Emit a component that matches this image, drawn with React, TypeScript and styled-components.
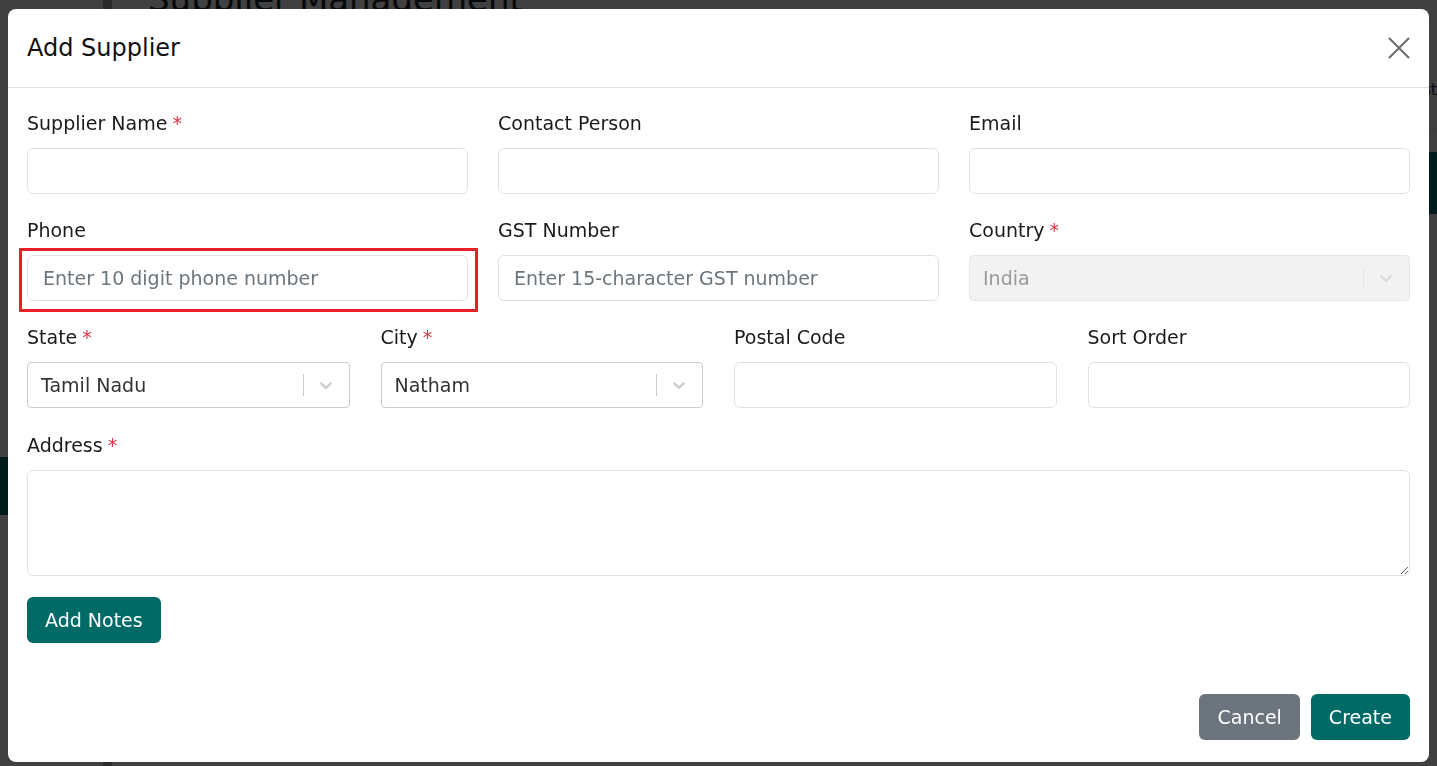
import React from 'react'
import type { FC } from 'react'
import styled, { createGlobalStyle } from 'styled-components'

const GlobalStyle = createGlobalStyle`
  html, body {
    margin: 0;
    padding: 0;
    width: 100%;
    height: 100%;
    overflow: hidden;
    font-family: 'DejaVu Sans', 'Open Sans', sans-serif;
    color: #212529;
  }
  * {
    box-sizing: border-box;
  }
`

const TEAL = '#006b66'

// page behind the dialog
const Page = styled.div`
  display: flex;
  width: 1437px;
  height: 766px;
  background: #ffffff;
`

const Sidebar = styled.aside`
  display: flex;
  flex-direction: column;
  flex-shrink: 0;
  width: 112px;
  padding-top: 457px;
  background: #ffffff;
  border-right: 9px solid #a8a8a8;
`

const SideItem = styled.div<{ $active?: boolean }>`
  flex-shrink: 0;
  height: 58px;
  padding: 0 14px;
  display: flex;
  align-items: center;
  font-size: 16px;
  color: ${(p) => (p.$active ? '#ffffff' : '#212529')};
  background: ${(p) => (p.$active ? TEAL : 'transparent')};
  margin-bottom: ${(p) => (p.$active ? '0' : '130px')};
`

const Main = styled.main`
  flex: 1;
  padding: 0 0 0 36px;
`

const PageTitle = styled.h1`
  margin: -24px 0 0;
  font-size: 34px;
  font-weight: 500;
  line-height: 46px;
`

const Toolbar = styled.div`
  display: flex;
  justify-content: flex-end;
  align-items: flex-start;
  padding-top: 58px;
  height: 108px;
  border-bottom: 1px solid #dee2e6;
  font-size: 16px;
`

const TableHead = styled.div`
  margin-top: 22px;
  height: 62px;
  background: ${TEAL};
`

const Backdrop = styled.div`
  position: fixed;
  inset: 0;
  background: rgba(0, 0, 0, 0.75);
  display: flex;
  padding: 9px 8px 4px 8px;
`

const Dialog = styled.div`
  flex: 1;
  display: flex;
  flex-direction: column;
  background: #ffffff;
  border-radius: 8px;
`

const Header = styled.header`
  display: flex;
  align-items: center;
  justify-content: space-between;
  height: 79px;
  padding: 0 18px 0 19px;
  border-bottom: 1px solid #dee2e6;
`

const Title = styled.h2`
  margin: 0;
  font-size: 24px;
  font-weight: 400;
  color: #111111;
`

const CloseButton = styled.button`
  display: flex;
  border: 0;
  background: none;
  padding: 0;
  cursor: pointer;
`

const Body = styled.div`
  flex: 1;
  padding: 22px 19px 0;
`

const Row = styled.div<{ $cols: number; $gap: number; $space?: number }>`
  display: grid;
  grid-template-columns: repeat(${(p) => p.$cols}, 1fr);
  column-gap: ${(p) => p.$gap}px;
  margin-bottom: ${(p) => p.$space ?? 23}px;
`

const Field = styled.div`
  display: flex;
  flex-direction: column;
  position: relative;
`

const Label = styled.label`
  font-size: 19px;
  line-height: 27px;
  margin-bottom: 11px;
  color: #1a1a1a;
`

const Required = styled.span`
  color: #dc3545;
  margin-left: 5px;
`

const Input = styled.input`
  height: 46px;
  padding: 0 15px;
  border: 1px solid #dee2e6;
  border-radius: 6px;
  font-family: inherit;
  font-size: 19px;
  color: #212529;
  outline: none;
  &::placeholder {
    color: #6c757d;
  }
`

const TextArea = styled.textarea`
  height: 106px;
  padding: 10px 15px;
  border: 1px solid #dee2e6;
  border-radius: 6px;
  font-family: inherit;
  font-size: 19px;
  resize: vertical;
  outline: none;
`

// red marker drawn around the phone input
const Highlight = styled.span`
  position: absolute;
  left: -8px;
  right: -10px;
  top: 31px;
  bottom: -11px;
  border: 3px solid #e8202a;
  pointer-events: none;
`

const SelectBox = styled.div<{ $disabled?: boolean }>`
  display: flex;
  align-items: center;
  height: 46px;
  border: 1px solid ${(p) => (p.$disabled ? '#e6e6e6' : '#cccccc')};
  border-radius: 4px;
  background: ${(p) => (p.$disabled ? '#f2f2f2' : '#ffffff')};
`

const SelectValue = styled.span<{ $disabled?: boolean }>`
  flex: 1;
  padding-left: 13px;
  font-size: 19px;
  color: ${(p) => (p.$disabled ? '#999999' : '#333333')};
`

const Separator = styled.span<{ $disabled?: boolean }>`
  align-self: stretch;
  width: 1px;
  margin: 11px 0;
  background: ${(p) => (p.$disabled ? '#e6e6e6' : '#cccccc')};
`

const Indicator = styled.span<{ $disabled?: boolean }>`
  display: flex;
  padding: 0 13px 0 12px;
  color: ${(p) => (p.$disabled ? '#d9d9d9' : '#cccccc')};
`

const Button = styled.button<{ $variant?: 'primary' | 'secondary' }>`
  height: 46px;
  padding: 0 18px;
  border: 0;
  border-radius: 6px;
  font-family: inherit;
  font-size: 19px;
  font-weight: 400;
  color: #ffffff;
  background: ${(p) => (p.$variant === 'secondary' ? '#6c757d' : TEAL)};
  cursor: pointer;
`

const Footer = styled.footer`
  display: flex;
  justify-content: flex-end;
  gap: 11px;
  padding: 0 19px 22px;
`

const Chevron: FC = () => (
  <svg width="20" height="20" viewBox="0 0 20 20" fill="currentColor">
    <path d="M4.516 7.548c0.436-0.446 1.043-0.481 1.576 0l3.908 3.747 3.908-3.747c0.533-0.481 1.141-0.446 1.574 0 0.436 0.445 0.408 1.197 0 1.615-0.406 0.418-4.695 4.502-4.695 4.502-0.217 0.223-0.502 0.335-0.787 0.335s-0.57-0.112-0.789-0.335c0 0-4.287-4.084-4.695-4.502s-0.436-1.170 0-1.615z" />
  </svg>
)

type SelectProps = { value: string; disabled?: boolean }

const Select: FC<SelectProps> = ({ value, disabled }) => (
  <SelectBox $disabled={disabled}>
    <SelectValue $disabled={disabled}>{value}</SelectValue>
    <Separator $disabled={disabled} />
    <Indicator $disabled={disabled}>
      <Chevron />
    </Indicator>
  </SelectBox>
)

type LabelProps = { text: string; required?: boolean }

const FieldLabel: FC<LabelProps> = ({ text, required }) => (
  <Label>
    {text}
    {required && <Required>*</Required>}
  </Label>
)

const App: FC = () => {
  return (
    <>
      <GlobalStyle />
      <Page>
        <Sidebar>
          <SideItem $active>Supplier</SideItem>
          <SideItem>Supplier</SideItem>
          <SideItem>Order</SideItem>
        </Sidebar>
        <Main>
          <PageTitle>Supplier Management</PageTitle>
          <Toolbar>Supplier List</Toolbar>
          <TableHead />
        </Main>
      </Page>

      <Backdrop>
        <Dialog role="dialog">
          <Header>
            <Title>Add Supplier</Title>
            <CloseButton aria-label="Close">
              <svg width="24" height="24" viewBox="0 0 24 24" fill="none" stroke="#6b6b6b" strokeWidth="2">
                <path d="M2 2 L22 22 M22 2 L2 22" />
              </svg>
            </CloseButton>
          </Header>

          <Body>
            <Row $cols={3} $gap={30}>
              <Field>
                <FieldLabel text="Supplier Name" required />
                <Input />
              </Field>
              <Field>
                <FieldLabel text="Contact Person" />
                <Input />
              </Field>
              <Field>
                <FieldLabel text="Email" />
                <Input type="email" />
              </Field>
            </Row>

            <Row $cols={3} $gap={30}>
              <Field>
                <FieldLabel text="Phone" />
                <Input placeholder="Enter 10 digit phone number" />
                <Highlight />
              </Field>
              <Field>
                <FieldLabel text="GST Number" />
                <Input placeholder="Enter 15-character GST number" />
              </Field>
              <Field>
                <FieldLabel text="Country" required />
                <Select value="India" disabled />
              </Field>
            </Row>

            <Row $cols={4} $gap={31} $space={24}>
              <Field>
                <FieldLabel text="State" required />
                <Select value="Tamil Nadu" />
              </Field>
              <Field>
                <FieldLabel text="City" required />
                <Select value="Natham" />
              </Field>
              <Field>
                <FieldLabel text="Postal Code" />
                <Input />
              </Field>
              <Field>
                <FieldLabel text="Sort Order" />
                <Input />
              </Field>
            </Row>

            <Row $cols={1} $gap={0} $space={21}>
              <Field>
                <FieldLabel text="Address" required />
                <TextArea />
              </Field>
            </Row>

            <Button>Add Notes</Button>
          </Body>

          <Footer>
            <Button $variant="secondary">Cancel</Button>
            <Button>Create</Button>
          </Footer>
        </Dialog>
      </Backdrop>
    </>
  )
}

export default App
